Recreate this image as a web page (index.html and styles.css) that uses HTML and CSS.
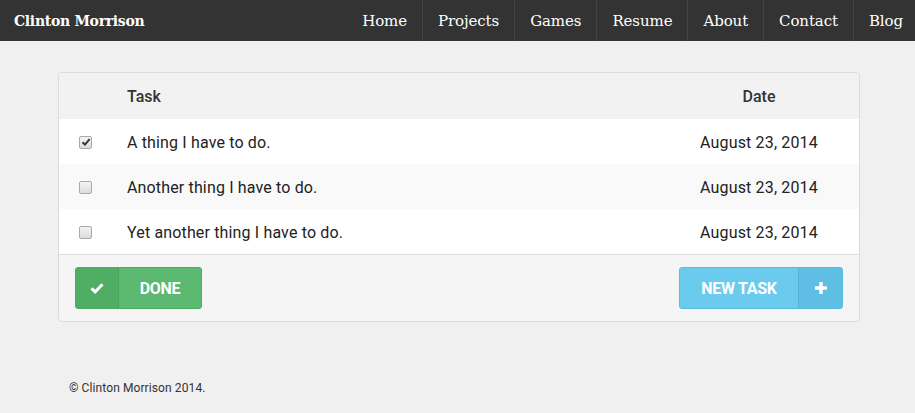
FILE: index.html
```html
<!DOCTYPE html>
<html lang="en">
<head>
<meta charset="utf-8">
<title>Clinton Morrison - Tasks</title>
<link rel="stylesheet" href="styles.css">
</head>
<body>
<header class="navbar">
  <a class="brand" href="#">Clinton Morrison</a>
  <nav class="nav">
    <a class="nav-item" href="#">Home</a>
    <a class="nav-item" href="#">Projects</a>
    <a class="nav-item" href="#">Games</a>
    <a class="nav-item" href="#">Resume</a>
    <a class="nav-item" href="#">About</a>
    <a class="nav-item" href="#">Contact</a>
    <a class="nav-item" href="#">Blog</a>
  </nav>
</header>

<main class="page">
  <section class="card">
    <div class="row row-head">
      <div class="col-check"></div>
      <div class="col-task">Task</div>
      <div class="col-date">Date</div>
    </div>
    <div class="row">
      <div class="col-check"><span class="check checked"><svg viewBox="0 0 10 10" width="10" height="10"><path d="M1.5 5.2 L4 7.6 L8.6 2.2" fill="none" stroke="#333" stroke-width="2"/></svg></span></div>
      <div class="col-task">A thing I have to do.</div>
      <div class="col-date">August 23, 2014</div>
    </div>
    <div class="row row-alt">
      <div class="col-check"><span class="check"></span></div>
      <div class="col-task">Another thing I have to do.</div>
      <div class="col-date">August 23, 2014</div>
    </div>
    <div class="row">
      <div class="col-check"><span class="check"></span></div>
      <div class="col-task">Yet another thing I have to do.</div>
      <div class="col-date">August 23, 2014</div>
    </div>
    <div class="card-foot">
      <button class="btn btn-done">
        <span class="btn-icon"><svg viewBox="0 0 14 12" width="14" height="12"><path d="M1.5 6.3 L5.2 9.8 L12.5 2.2" fill="none" stroke="#fff" stroke-width="3"/></svg></span>
        <span class="btn-label">Done</span>
      </button>
      <button class="btn btn-new">
        <span class="btn-label">New Task</span>
        <span class="btn-icon"><svg viewBox="0 0 14 14" width="14" height="14"><path d="M7 1 V13 M1 7 H13" fill="none" stroke="#fff" stroke-width="3.4"/></svg></span>
      </button>
    </div>
  </section>
</main>

<footer class="site-foot">© Clinton Morrison 2014.</footer>
</body>
</html>
```

FILE: styles.css
```css
* { box-sizing: border-box; }

html, body {
  margin: 0;
  padding: 0;
}

body {
  background: #f0f0f0;
  font-family: Roboto, "Noto Sans", Arial, sans-serif;
  color: #222;
  font-size: 16px;
}

.navbar {
  height: 41px;
  background: #333;
  display: flex;
  align-items: stretch;
  justify-content: space-between;
}

.brand {
  color: #fff;
  text-decoration: none;
  font-family: "DejaVu Serif", "Liberation Serif", serif;
  font-weight: bold;
  font-size: 14px;
  letter-spacing: -0.3px;
  padding-left: 14px;
  display: flex;
  align-items: center;
}

.nav {
  display: flex;
}

.nav-item {
  color: #fff;
  text-decoration: none;
  font-family: "DejaVu Serif", "Liberation Serif", serif;
  font-size: 15px;
  letter-spacing: -0.1px;
  padding: 0 15px;
  display: flex;
  align-items: center;
  border-left: 1px solid #444;
}

.nav-item:first-child { border-left: none; }
.nav-item:last-child { padding-right: 12px; }

.page {
  padding: 31px 0 0 58px;
}

.card {
  width: 802px;
  background: #f5f5f5;
  border: 1px solid #dcdcdc;
  border-radius: 4px;
  overflow: hidden;
}

.row {
  display: flex;
  align-items: center;
  height: 45px;
  padding-top: 1px;
  background: #fff;
  letter-spacing: 0.15px;
}

.row-alt { background: #f9f9f9; }

.row-head {
  height: 46px;
  background: #f2f2f2;
  font-weight: 500;
  color: #333;
  letter-spacing: 0;
}

.col-check {
  width: 68px;
  padding-left: 20px;
  display: flex;
  align-items: center;
}

.col-task { flex: 1; }

.col-date {
  width: 200px;
  text-align: center;
}

.check {
  width: 13px;
  height: 13px;
  border: 1px solid #a9a9a9;
  border-radius: 2px;
  background: linear-gradient(#f4f4f4, #dcdcdc);
  display: flex;
  align-items: center;
  justify-content: center;
}

.card-foot {
  border-top: 1px solid #dedede;
  padding: 12px 16px 12px 16px;
  display: flex;
  justify-content: space-between;
}

.btn {
  display: flex;
  align-items: stretch;
  height: 42px;
  padding: 0;
  border-radius: 3px;
  font-family: Roboto, "Noto Sans", Arial, sans-serif;
  font-size: 16px;
  font-weight: bold;
  color: #fff;
  text-transform: uppercase;
  overflow: hidden;
  cursor: pointer;
}

.btn-icon, .btn-label {
  display: flex;
  align-items: center;
  justify-content: center;
}

.btn-done {
  width: 127px;
  background: #5cb971;
  border: 1px solid #4fab62;
}

.btn-done .btn-icon {
  width: 43px;
  background: #50ad64;
  border-right: 1px solid #4aa45e;
}

.btn-done .btn-label {
  flex: 1;
  letter-spacing: -0.3px;
}

.btn-new {
  width: 164px;
  background: #6acbef;
  border: 1px solid #5cbbe0;
}

.btn-new .btn-label {
  flex: 1;
  letter-spacing: -0.3px;
}

.btn-new .btn-icon {
  width: 44px;
  background: #5fbee3;
  border-left: 1px solid #58b3d6;
}

.site-foot {
  padding: 59px 0 0 69px;
  font-size: 12px;
  letter-spacing: 0.1px;
  color: #333;
}
```
